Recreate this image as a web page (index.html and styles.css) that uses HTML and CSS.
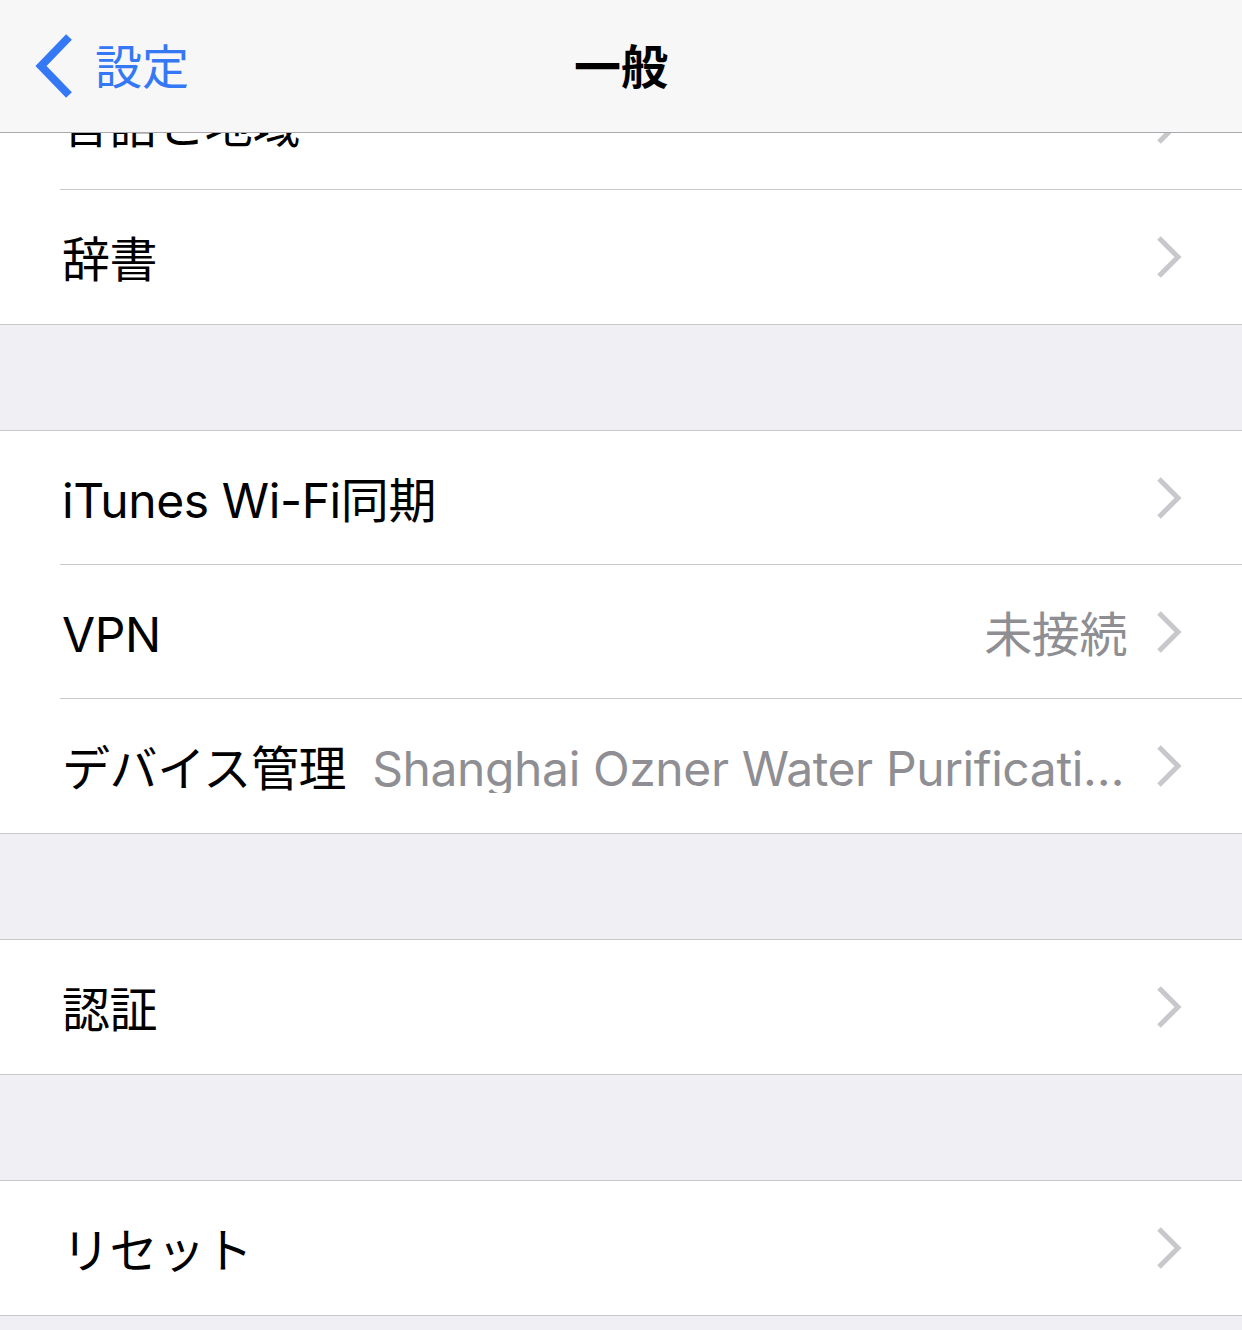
FILE: index.html
```html
<!DOCTYPE html>
<html lang="ja">
<head>
<meta charset="utf-8">
<title>一般</title>
<link rel="stylesheet" href="styles.css">
</head>
<body>
<header class="navbar">
  <a class="back">
    <svg class="back-chevron" width="40" height="66" viewBox="0 0 40 66"><polyline points="34,4 6,33 34,62" fill="none" stroke="#3478f6" stroke-width="8" stroke-linecap="butt" stroke-linejoin="miter"/></svg>
    <span class="back-label">設定</span>
  </a>
  <h1 class="title">一般</h1>
</header>
<main class="list">
  <section class="group">
    <div class="row"><div class="row-inner"><span class="label">言語と地域</span><svg class="chev" width="26" height="42" viewBox="0 0 26 42"><polyline points="3,2 22,21 3,40" fill="none" stroke="#c7c7cc" stroke-width="5"/></svg></div></div>
    <div class="row"><div class="row-inner"><span class="label">辞書</span><svg class="chev" width="26" height="42" viewBox="0 0 26 42"><polyline points="3,2 22,21 3,40" fill="none" stroke="#c7c7cc" stroke-width="5"/></svg></div></div>
  </section>
  <section class="group">
    <div class="row"><div class="row-inner"><span class="label">iTunes Wi-Fi同期</span><svg class="chev" width="26" height="42" viewBox="0 0 26 42"><polyline points="3,2 22,21 3,40" fill="none" stroke="#c7c7cc" stroke-width="5"/></svg></div></div>
    <div class="row"><div class="row-inner"><span class="label">VPN</span><span class="value">未接続</span><svg class="chev" width="26" height="42" viewBox="0 0 26 42"><polyline points="3,2 22,21 3,40" fill="none" stroke="#c7c7cc" stroke-width="5"/></svg></div></div>
    <div class="row"><div class="row-inner"><span class="label">デバイス管理</span><span class="value value-fill">Shanghai Ozner Water Purification Technology Co., Ltd.</span><svg class="chev" width="26" height="42" viewBox="0 0 26 42"><polyline points="3,2 22,21 3,40" fill="none" stroke="#c7c7cc" stroke-width="5"/></svg></div></div>
  </section>
  <section class="group">
    <div class="row"><div class="row-inner"><span class="label">認証</span><svg class="chev" width="26" height="42" viewBox="0 0 26 42"><polyline points="3,2 22,21 3,40" fill="none" stroke="#c7c7cc" stroke-width="5"/></svg></div></div>
  </section>
  <section class="group">
    <div class="row"><div class="row-inner"><span class="label">リセット</span><svg class="chev" width="26" height="42" viewBox="0 0 26 42"><polyline points="3,2 22,21 3,40" fill="none" stroke="#c7c7cc" stroke-width="5"/></svg></div></div>
  </section>
</main>
</body>
</html>
```

FILE: styles.css
```css
* { box-sizing: border-box; }

html, body {
  margin: 0;
  padding: 0;
  background: #efeff4;
  font-family: "Inter", "Noto Sans CJK JP", sans-serif;
  font-size: 48px;
  letter-spacing: -0.4px;
  color: #000;
}

.navbar {
  position: fixed;
  top: 0;
  left: 0;
  right: 0;
  height: 133px;
  background: #f7f7f7;
  border-bottom: 1px solid #a9a9ad;
  z-index: 10;
}

.back {
  position: absolute;
  left: 35px;
  top: 33px;
  display: flex;
  align-items: center;
  gap: 20px;
  color: #3478f6;
}

.back-label {
  font-family: "Noto Sans CJK JP", sans-serif;
  font-size: 47px;
  letter-spacing: 0;
  line-height: 66px;
  margin-top: -5px;
  color: #3478f6;
}

.title {
  margin: 0;
  position: absolute;
  left: 0;
  right: 0;
  top: 0;
  height: 132px;
  padding-bottom: 6px;
  display: flex;
  align-items: center;
  justify-content: center;
  font-family: "Noto Sans CJK JP", sans-serif;
  font-size: 47px;
  letter-spacing: 0;
  font-weight: 700;
}

.list {
  padding-top: 55px;
  padding-bottom: 40px;
  display: flex;
  flex-direction: column;
  gap: 105px;
}

.group {
  background: #fff;
  border-top: 1px solid #c8c7cc;
  border-bottom: 1px solid #c8c7cc;
}

.row {
  padding-left: 60px;
}

.row-inner {
  height: 134px;
  display: flex;
  align-items: center;
  padding-right: 60px;
  padding-top: 6px;
  border-bottom: 1px solid #c8c7cc;
  line-height: 1;
  white-space: nowrap;
}

.row:last-child .row-inner {
  border-bottom: none;
}

.label {
  flex: none;
  padding-left: 2px;
}

.value {
  margin-left: auto;
  color: #8e8e93;
  padding-right: 29px;
}

.value-fill {
  flex: 1;
  min-width: 0;
  margin-left: 26px;
  overflow: hidden;
  text-overflow: ellipsis;
  text-align: right;
}

.chev {
  flex: none;
  margin-left: auto;
  margin-top: -6px;
}

.value + .chev {
  margin-left: 0;
}
```
